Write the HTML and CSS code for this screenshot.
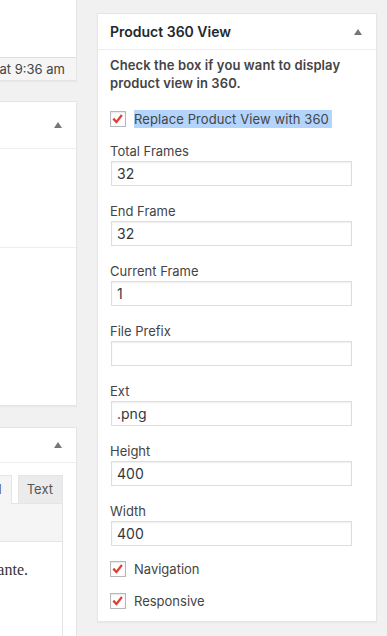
FILE: index.html
```html
<!DOCTYPE html>
<html lang="en">
<head>
  <meta charset="UTF-8">
  <title>Edit Product</title>
  <link rel="stylesheet" href="styles.css">
</head>
<body>
  <div class="page">
    <div class="main-col">
      <div class="main-inner">
        <div class="box box-publish">
          <div class="publish-body"></div>
          <div class="publish-footer">Last edited on January 9, 2017 at 9:36 am</div>
        </div>

        <div class="box box-meta">
          <div class="box-head"><span class="toggle-arrow"></span></div>
          <div class="meta-top"></div>
          <div class="meta-bottom"></div>
        </div>

        <div class="box box-editor">
          <div class="box-head short"><span class="toggle-arrow"></span></div>
          <div class="editor-wrap">
            <div class="editor-tabs">
              <span class="tab tab-visual">Visual</span>
              <span class="tab tab-text">Text</span>
            </div>
            <div class="editor-toolbar"></div>
            <div class="editor-area">Lorem ipsum dolor sit amet, pellentesque ante.</div>
          </div>
        </div>
      </div>
    </div>

    <div class="side-col">
      <div class="postbox">
        <div class="postbox-head">
          <h2>Product 360 View</h2>
          <span class="toggle-arrow"></span>
        </div>
        <div class="postbox-inside">
          <p class="intro">Check the box if you want to display product view in 360.</p>

          <label class="check-row first">
            <span class="checkbox"><svg viewBox="0 0 16 16"><path d="M2.6 8.4l1.9-1.7 2.3 2.6 4.9-6.3 2 1.5-6.8 8.6z"/></svg></span>
            <span class="selected">Replace Product View with 360</span>
          </label>

          <div class="field">
            <label>Total Frames</label>
            <div class="input">32</div>
          </div>
          <div class="field">
            <label>End Frame</label>
            <div class="input">32</div>
          </div>
          <div class="field">
            <label>Current Frame</label>
            <div class="input">1</div>
          </div>
          <div class="field">
            <label>File Prefix</label>
            <div class="input"></div>
          </div>
          <div class="field">
            <label>Ext</label>
            <div class="input">.png</div>
          </div>
          <div class="field">
            <label>Height</label>
            <div class="input">400</div>
          </div>
          <div class="field">
            <label>Width</label>
            <div class="input">400</div>
          </div>

          <label class="check-row">
            <span class="checkbox"><svg viewBox="0 0 16 16"><path d="M2.6 8.4l1.9-1.7 2.3 2.6 4.9-6.3 2 1.5-6.8 8.6z"/></svg></span>
            <span>Navigation</span>
          </label>
          <label class="check-row">
            <span class="checkbox"><svg viewBox="0 0 16 16"><path d="M2.6 8.4l1.9-1.7 2.3 2.6 4.9-6.3 2 1.5-6.8 8.6z"/></svg></span>
            <span>Responsive</span>
          </label>
        </div>
      </div>
    </div>
  </div>
</body>
</html>
```

FILE: styles.css
```css
body {
  margin: 0;
  background: #f1f1f1;
  font-family: 'Inter', 'Liberation Sans', sans-serif;
  font-size: 13px;
  color: #444;
  overflow: hidden;
}

.page {
  display: flex;
  align-items: flex-start;
}

/* left column, only its right edge shows in the window */
.main-col {
  width: 77px;
  flex: none;
  overflow: hidden;
}

.main-inner {
  width: 500px;
  margin-left: -423px;
}

.box {
  background: #fff;
  border: 1px solid #e5e5e5;
  box-shadow: 0 1px 1px rgba(0, 0, 0, 0.04);
}

.box-publish {
  border-top: none;
}

.publish-body {
  height: 57px;
}

.publish-footer {
  height: 22px;
  background: #f5f5f5;
  border-top: 1px solid #ddd;
  text-align: right;
  padding-right: 11px;
  font-size: 13px;
  line-height: 22px;
  color: #444;
}

.box-meta {
  margin-top: 20px;
}

.box-head {
  height: 46px;
  border-bottom: 1px solid #eee;
  display: flex;
  align-items: center;
  justify-content: flex-end;
  padding-right: 14px;
}

.box-head.short {
  height: 34px;
}

.toggle-arrow {
  width: 0;
  height: 0;
  border-left: 4px solid transparent;
  border-right: 4px solid transparent;
  border-bottom: 6px solid #72777c;
}

.meta-top {
  height: 98px;
  border-bottom: 1px solid #eee;
}

.meta-bottom {
  height: 157px;
}

.box-editor {
  margin-top: 21px;
  height: 260px;
  border-bottom: none;
}

.editor-wrap {
  margin: 0 13px 0 12px;
  padding-top: 12px;
}

.editor-tabs {
  display: flex;
  justify-content: flex-end;
  gap: 6px;
  height: 28px;
}

.tab {
  height: 27px;
  line-height: 27px;
  padding: 0 9px;
  font-size: 13px;
  color: #555;
  border: 1px solid #e5e5e5;
  border-bottom: none;
}

.tab-text {
  background: #ebebeb;
  padding: 0 9px 0 8px;
}

.tab-visual {
  background: #f5f5f5;
  height: 28px;
  margin-bottom: -1px;
  position: relative;
}

.editor-toolbar {
  height: 37px;
  background: #f5f5f5;
  border: 1px solid #e5e5e5;
}

.editor-area {
  height: 200px;
  border-right: 1px solid #e5e5e5;
  border-left: 1px solid #e5e5e5;
  font-family: 'Liberation Serif', 'DejaVu Serif', serif;
  font-size: 16px;
  color: #333;
  white-space: nowrap;
  text-align: right;
  padding: 19px 34px 0 0;
}

/* right column */
.side-col {
  margin-left: 20px;
  margin-top: 13px;
  width: 280px;
}

.postbox {
  background: #fff;
  border: 1px solid #e5e5e5;
  box-shadow: 0 1px 1px rgba(0, 0, 0, 0.04);
}

.postbox-head {
  height: 35px;
  border-bottom: 1px solid #eee;
  display: flex;
  align-items: center;
  justify-content: space-between;
  padding: 0 14px 0 12px;
}

.postbox-head h2 {
  margin: 0;
  font-size: 14px;
  font-weight: 600;
  color: #23282d;
}

.postbox-inside {
  padding: 6px 12px 11px;
}

.intro {
  margin: 0 0 18px;
  font-weight: 600;
  line-height: 18px;
  color: #444;
  letter-spacing: 0.1px;
}

.check-row {
  display: flex;
  align-items: center;
  gap: 8px;
  height: 18px;
  margin-top: 14px;
  color: #444;
}

.check-row.first {
  margin: 0 0 14px;
}

.checkbox {
  width: 14px;
  height: 14px;
  flex: none;
  border: 1px solid #b4b9be;
  background: #fff;
  box-shadow: inset 0 1px 2px rgba(0, 0, 0, 0.1);
  display: flex;
}

.checkbox svg {
  width: 16px;
  height: 16px;
  margin: -1px 0 0 -1px;
  fill: #e0403a;
}

.selected {
  background: #b3d4fc;
  line-height: 18px;
  padding-right: 3px;
  letter-spacing: 0.1px;
}

.field {
  margin-bottom: 16px;
}

.field:last-of-type {
  margin-bottom: 0;
}

.field label {
  display: block;
  line-height: 18px;
  margin-bottom: 1px;
}

.field .input {
  width: 229px;
  height: 23px;
  margin-left: 1px;
  border: 1px solid #ddd;
  box-shadow: inset 0 1px 2px rgba(0, 0, 0, 0.07);
  padding: 0 5px;
  font-size: 14px;
  line-height: 23px;
  color: #32373c;
}
```
